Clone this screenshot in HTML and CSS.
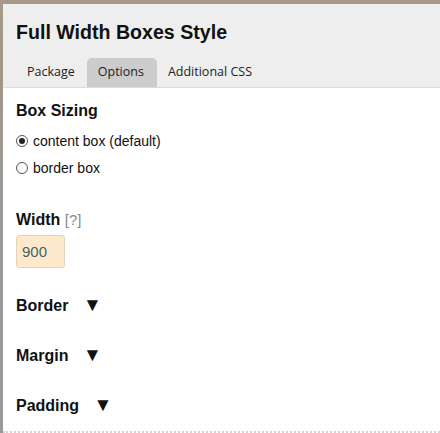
FILE: index.html
```html
<!DOCTYPE html>
<html>
<head>
<meta charset="utf-8">
<link rel="stylesheet" href="styles.css">
</head>
<body>
<div class="panel">
  <div class="header">
    <h1 class="title">Full Width Boxes Style</h1>
    <div class="tabs">
      <span class="tab">Package</span>
      <span class="tab active">Options</span>
      <span class="tab">Additional CSS</span>
    </div>
  </div>
  <div class="content">
    <div class="section">
      <h2 class="label">Box Sizing</h2>
      <label class="radio"><span class="dot checked"></span>content box (default)</label>
      <label class="radio"><span class="dot"></span>border box</label>
    </div>
    <div class="section width">
      <h2 class="label">Width <span class="help">[?]</span></h2>
      <div class="input">900</div>
    </div>
    <div class="toggle first">Border <span class="arrow">▼</span></div>
    <div class="toggle">Margin <span class="arrow">▼</span></div>
    <div class="toggle">Padding <span class="arrow">▼</span></div>
  </div>
</div>
</body>
</html>
```
FILE: styles.css
```css
html, body { margin: 0; padding: 0; }
body {
  width: 440px;
  height: 433px;
  overflow: hidden;
  background: linear-gradient(#a8998a 0, #a39683 60px, #9a9a9a 200px, #999 433px);
  font-family: "Liberation Sans", Arial, sans-serif;
  padding: 4px 0 0 3px;
  box-sizing: border-box;
}
.panel {
  background: #fff;
  height: 429px;
  display: flex;
  flex-direction: column;
}
.header {
  background: #eeeeee;
  border-bottom: 1px solid #dcdcdc;
  padding: 0 0 0 13px;
}
.title {
  margin: 0;
  padding: 17px 0 0 0;
  font-size: 19.6px;
  font-weight: bold;
  color: #111;
  line-height: 22px;
}
.tabs {
  display: flex;
  margin-top: 15px;
  font-family: "Open Sans", "Noto Sans", sans-serif;
  font-size: 12.5px;
  color: #222;
}
.tab {
  padding: 5px 12px 6px 11px;
  line-height: 18px;
  border-radius: 5px 5px 0 0;
}
.tab.active { background: #cccccc; padding-right: 13px; }
.content {
  padding: 0 0 0 13px;
  flex: 1;
  border-bottom: 2px dotted #d4d4d4;
}
.label {
  margin: 13px 0 0 0;
  font-size: 16px;
  font-weight: bold;
  color: #111;
  line-height: 20px;
}
.radio {
  display: flex;
  align-items: center;
  font-size: 14px;
  color: #111;
  height: 16px;
  margin-top: 12px;
}
.radio + .radio { margin-top: 11px; }
.dot {
  width: 10px;
  height: 10px;
  border: 1px solid #555;
  border-radius: 50%;
  margin-right: 5px;
  box-sizing: content-box;
  display: inline-flex;
  align-items: center;
  justify-content: center;
  background: #fff;
}
.dot.checked::after {
  content: "";
  width: 6px;
  height: 6px;
  border-radius: 50%;
  background: #222;
}
.width .label { margin-top: 34px; }
.help { font-weight: normal; color: #888; font-size: 15px; }
.input {
  margin-top: 5px;
  width: 49px;
  height: 33px;
  box-sizing: border-box;
  background: #ffe9cd;
  border: 1px solid #e3d3b8;
  border-radius: 3px;
  color: #3f6463;
  font-size: 15px;
  line-height: 31px;
  padding-left: 5px;
}
.toggle {
  font-size: 16px;
  font-weight: bold;
  color: #111;
  margin-top: 30px;
  line-height: 20px;
  height: 20px;
}
.toggle.first { margin-top: 27px; }
.toggle .arrow {
  margin-left: 10px;
  font-size: 19px;
  line-height: 1;
}
```
